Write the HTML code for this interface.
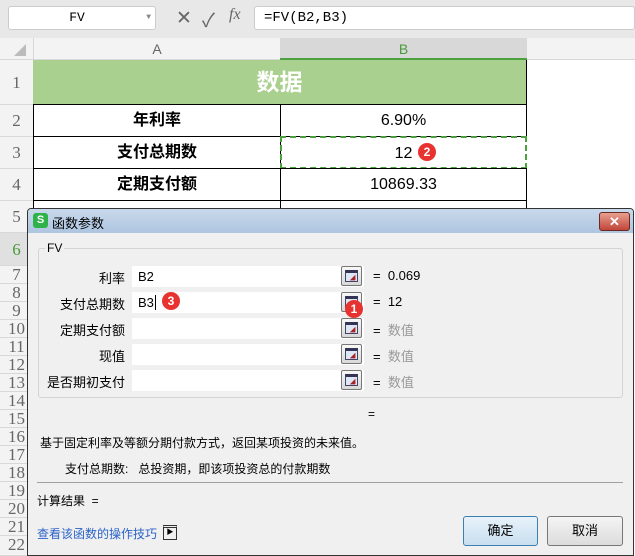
<!DOCTYPE html>
<html><head><meta charset="utf-8"><style>
*{box-sizing:border-box;margin:0;padding:0}
body{width:635px;height:556px;overflow:hidden;background:#fff;font-family:"Liberation Sans","Noto Sans CJK SC",sans-serif;position:relative;font-size:13px;color:#000}
.a{position:absolute}
.rh{position:absolute;left:0;width:33px;text-align:center;color:#666;font-family:"Liberation Serif","Noto Serif CJK SC",serif;font-size:17px;border-bottom:1px solid #d8d8d8;background:#f3f3f3}
.cell{position:absolute;border:1px solid #000;text-align:center;font-size:16px}
.badge{position:absolute;width:18px;height:18px;border-radius:9px;background:#e8322f;color:#fff;font-size:12px;font-weight:bold;text-align:center;line-height:18px}
.lbl{position:absolute;right:510px;font-size:13px;text-align:right;white-space:nowrap}
.inp{position:absolute;left:132px;width:232px;height:21px;background:#fff}
.btn{position:absolute;left:341px;width:21px;height:20px;border:1px solid #777;border-radius:2px;background:linear-gradient(#f8f8f8,#d8d8d8)}
.btn i{position:absolute;left:3px;top:3px;width:13px;height:12px;border:1px solid #446;background:#dde6f4;border-top:3px solid #335}
.btn b{position:absolute;left:10px;top:8px;width:0;height:0;border-left:4px solid #a22;border-top:4px solid transparent;border-bottom:4px solid transparent;transform:rotate(45deg)}
.eq{position:absolute;left:373px;font-size:13px}
</style></head><body>
<!-- formula bar -->
<div class="a" style="left:0;top:0;width:635px;height:38px;background:#e8e8e8"></div>
<div class="a" style="left:8px;top:6px;width:148px;height:24px;background:#fff;border:1px solid #ccc;border-radius:3px;font-family:'Liberation Mono',monospace;font-size:13px;text-align:center;line-height:22px;padding-right:10px">FV<span style="position:absolute;right:4px;font-size:8px;color:#888">▼</span></div>
<div class="a" style="left:176px;top:7px;font-size:19px;color:#666">✕</div>
<div class="a" style="left:202px;top:6px;font-size:19px;color:#666">✓</div>
<div class="a" style="left:229px;top:6px;font-size:16px;color:#666;font-style:italic;font-family:'Liberation Serif',serif">fx</div>
<div class="a" style="left:254px;top:6px;width:381px;height:24px;background:#fff;border:1px solid #ccc;border-radius:3px;font-family:'Liberation Mono',monospace;font-size:14px;line-height:22px;padding-left:9px">=FV(B2,B3)</div>
<!-- col headers -->
<div class="a" style="left:0;top:38px;width:635px;height:22px;background:#f3f3f3;border-bottom:1px solid #d8d8d8"></div>
<div class="a" style="left:14px;top:44px;width:0;height:0;border-left:12px solid transparent;border-bottom:12px solid #bbb"></div>
<div class="a" style="left:33px;top:38px;width:247px;height:22px;text-align:center;line-height:22px;color:#666;font-size:14px;border-left:1px solid #d8d8d8">A</div>
<div class="a" style="left:280px;top:38px;width:247px;height:22px;text-align:center;line-height:22px;color:#4a9a3a;font-size:14px;background:#d8d8d8;border-bottom:2px solid #4aa13d">B</div>
<!-- row headers -->
<div class="rh" style="top:60px;height:45px;line-height:45px">1</div>
<div class="rh" style="top:105px;height:32px;line-height:32px">2</div>
<div class="rh" style="top:137px;height:32px;line-height:32px">3</div>
<div class="rh" style="top:169px;height:32px;line-height:32px">4</div>
<div class="rh" style="top:201px;height:32px;line-height:32px">5</div>
<div class="rh" style="top:233px;height:33px;line-height:33px;background:#e0e0e0;color:#4a9a3a">6</div>
<div class="rh" style="top:266px;height:18px;line-height:18px">7</div>
<div class="rh" style="top:284px;height:18px;line-height:18px">8</div>
<div class="rh" style="top:302px;height:18px;line-height:18px">9</div>
<div class="rh" style="top:320px;height:18px;line-height:18px">10</div>
<div class="rh" style="top:338px;height:18px;line-height:18px">11</div>
<div class="rh" style="top:356px;height:18px;line-height:18px">12</div>
<div class="rh" style="top:374px;height:18px;line-height:18px">13</div>
<div class="rh" style="top:392px;height:18px;line-height:18px">14</div>
<div class="rh" style="top:410px;height:18px;line-height:18px">15</div>
<div class="rh" style="top:428px;height:18px;line-height:18px">16</div>
<div class="rh" style="top:446px;height:18px;line-height:18px">17</div>
<div class="rh" style="top:464px;height:18px;line-height:18px">18</div>
<div class="rh" style="top:482px;height:18px;line-height:18px">19</div>
<div class="rh" style="top:500px;height:18px;line-height:18px">20</div>
<div class="rh" style="top:518px;height:18px;line-height:18px">21</div>
<div class="rh" style="top:536px;height:20px;line-height:18px">22</div>
<!-- cells -->
<div class="a" style="left:33px;top:60px;width:494px;height:45px;background:#a9d08e;color:#fff;font-weight:bold;font-size:23px;text-align:center;line-height:45px;border-right:1px solid #000">数据</div>
<div class="cell" style="left:33px;top:104px;width:248px;height:33px;line-height:31px;font-weight:bold">年利率</div>
<div class="cell" style="left:280px;top:104px;width:247px;height:33px;line-height:31px">6.90%</div>
<div class="cell" style="left:33px;top:136px;width:248px;height:33px;line-height:31px;font-weight:bold">支付总期数</div>
<div class="cell" style="left:280px;top:136px;width:247px;height:33px;line-height:31px;border:2px dashed #4aa13d">12</div>
<div class="badge" style="left:418px;top:143px">2</div>
<div class="cell" style="left:33px;top:168px;width:248px;height:33px;line-height:31px;font-weight:bold">定期支付额</div>
<div class="cell" style="left:280px;top:168px;width:247px;height:33px;line-height:31px">10869.33</div>
<div class="cell" style="left:33px;top:200px;width:248px;height:30px"></div>
<div class="cell" style="left:280px;top:200px;width:247px;height:30px"></div>
<!-- dialog -->
<div class="a" style="left:27px;top:208px;width:607px;height:348px;background:#f0f0f0;border:1px solid #333;border-radius:4px 4px 0 0"></div>
<div class="a" style="left:28px;top:209px;width:605px;height:24px;background:linear-gradient(#c9d9ec,#aec5e0);border-radius:3px 3px 0 0"></div>
<div class="a" style="left:33px;top:213px;width:15px;height:15px;background:#2fb24a;border-radius:3px;color:#fff;font-size:11px;font-weight:bold;text-align:center;line-height:15px">S</div>
<div class="a" style="left:52px;top:213px;font-size:13px">函数参数</div>
<div class="a" style="left:599px;top:212px;width:31px;height:19px;border:1px solid #6b2a22;border-radius:3px;background:linear-gradient(#e8a090,#c0463a);color:#fff;font-weight:bold;text-align:center;line-height:17px;font-size:13px">✕</div>
<div class="a" style="left:38px;top:248px;width:585px;height:150px;border:1px solid #d4d4d4;border-radius:3px"></div>
<div class="a" style="left:45px;top:241px;background:#f0f0f0;padding:0 2px;font-size:12px">FV</div>

<div class="lbl" style="top:268px">利率</div>
<div class="inp" style="top:266px;padding-left:6px;line-height:21px">B2</div>
<div class="btn" style="top:266px"><i></i><b></b></div><div class="eq" style="top:268px">=&nbsp; 0.069</div>

<div class="lbl" style="top:294px">支付总期数</div>
<div class="inp" style="top:292px;padding-left:6px;line-height:21px">B3<span style="border-left:1px solid #000;margin-left:1px"></span></div>
<div class="badge" style="left:162px;top:292px">3</div>
<div class="btn" style="top:292px"><i></i><b></b></div><div class="eq" style="top:294px">=&nbsp; 12</div>
<div class="badge" style="left:345px;top:300px">1</div>

<div class="lbl" style="top:320px">定期支付额</div>
<div class="inp" style="top:318px"></div>
<div class="btn" style="top:318px"><i></i><b></b></div><div class="eq" style="top:320px">=&nbsp; <span style="color:#999">数值</span></div>

<div class="lbl" style="top:346px">现值</div>
<div class="inp" style="top:344px"></div>
<div class="btn" style="top:344px"><i></i><b></b></div><div class="eq" style="top:346px">=&nbsp; <span style="color:#999">数值</span></div>

<div class="lbl" style="top:372px">是否期初支付</div>
<div class="inp" style="top:370px"></div>
<div class="btn" style="top:370px"><i></i><b></b></div><div class="eq" style="top:372px">=&nbsp; <span style="color:#999">数值</span></div>

<div class="a" style="left:368px;top:407px;font-size:12px">=</div>
<div class="a" style="left:40px;top:434px;font-size:12px">基于固定利率及等额分期付款方式，返回某项投资的未来值。</div>
<div class="a" style="left:65px;top:460px;font-size:12px">支付总期数:&nbsp;&nbsp; 总投资期，即该项投资总的付款期数</div>
<div class="a" style="left:37px;top:482px;width:586px;height:1px;background:#a0a0a0"></div>
<div class="a" style="left:37px;top:492px;font-size:12px">计算结果 &nbsp;=</div>
<div class="a" style="left:37px;top:525px;font-size:12px;color:#2a62c8">查看该函数的操作技巧</div>
<div class="a" style="left:163px;top:525px;width:14px;height:15px;border:1px solid #333;border-top:3px double #333;font-size:7px;line-height:10px;text-align:center">▶</div>
<div class="a" style="left:463px;top:516px;width:75px;height:30px;border:1px solid #3c7fb1;border-radius:3px;background:linear-gradient(#e8f2fa,#c8dff0);text-align:center;line-height:28px;font-size:13px">确定</div>
<div class="a" style="left:547px;top:516px;width:76px;height:30px;border:1px solid #777;border-radius:3px;background:linear-gradient(#f4f4f4,#dcdcdc);text-align:center;line-height:28px;font-size:13px">取消</div>
</body></html>
